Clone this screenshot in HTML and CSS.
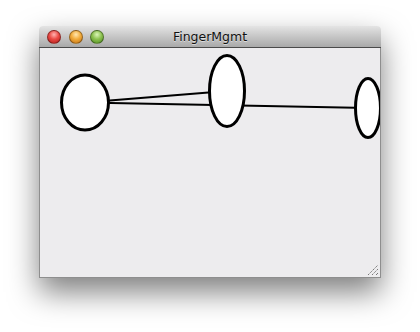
FILE: index.html
```html
<!DOCTYPE html>
<html lang="en">
<head>
    <meta charset="UTF-8">
    <meta name="viewport" content="width=device-width, initial-scale=1.0">
    <title>FingerMgmt</title>
    <link rel="stylesheet" href="styles.css">
</head>
<body>

<div class="window">
    <div class="titlebar">
        <div class="buttons">
            <span class="btn close"></span>
            <span class="btn minimize"></span>
            <span class="btn zoom"></span>
        </div>
        <div class="title">FingerMgmt</div>
    </div>
    <div class="content">
        <svg class="canvas" width="340" height="229" viewBox="0 0 340 229">
            <line x1="45" y1="54.5" x2="187" y2="43" stroke="#000" stroke-width="2"/>
            <line x1="45" y1="54.5" x2="328" y2="60" stroke="#000" stroke-width="2"/>
            <ellipse cx="45" cy="54.5" rx="23.5" ry="27.5" fill="#fff" stroke="#000" stroke-width="3"/>
            <ellipse cx="187" cy="43" rx="17.5" ry="35.5" fill="#fff" stroke="#000" stroke-width="3"/>
            <ellipse cx="328" cy="60" rx="12.5" ry="29.5" fill="#fff" stroke="#000" stroke-width="3"/>
        </svg>
        <svg class="grip" width="12" height="12" viewBox="0 0 12 12">
            <line x1="1" y1="11" x2="11" y2="1" stroke="#777" stroke-width="1" stroke-dasharray="1.5 0.8"/>
            <line x1="5" y1="11" x2="11" y2="5" stroke="#777" stroke-width="1" stroke-dasharray="1.5 0.8"/>
            <line x1="9" y1="11" x2="11" y2="9" stroke="#777" stroke-width="1"/>
        </svg>
    </div>
</div>

</body>
</html>
```

FILE: styles.css
```css
html, body {
    min-height: 332px;
}
body {
    margin: 0;
    padding: 26px 0 0 39px;
    box-sizing: border-box;
    background-color: #fff;
    font-family: "DejaVu Sans", Arial, sans-serif;
}
.window {
    width: 342px;
    border-radius: 4px 4px 0 0;
    box-shadow: 0 14px 30px rgba(0, 0, 0, 0.5);
}
.titlebar {
    position: relative;
    height: 21px;
    border-radius: 4px 4px 0 0;
    border-bottom: 1px solid #4a4a4a;
    background: linear-gradient(#e4e4e4, #c6c6c6 50%, #a9a9a9);
    display: flex;
    align-items: center;
}
.buttons {
    display: flex;
    gap: 7.5px;
    margin-left: 8px;
}
.btn {
    box-sizing: border-box;
    width: 14px;
    height: 14px;
    border-radius: 50%;
    border: 0.5px solid rgba(0, 0, 0, 0.35);
}
.close {
    background: radial-gradient(circle at 50% 30%, #ffb3b0 0, #ea4a45 45%, #b01a17 100%);
}
.minimize {
    background: radial-gradient(circle at 50% 30%, #ffe7b0 0, #f2ac3c 45%, #c06e10 100%);
}
.zoom {
    background: radial-gradient(circle at 50% 30%, #dbf5b8 0, #8dc250 45%, #4d8a1e 100%);
}
.title {
    position: absolute;
    left: 0;
    right: 0;
    text-align: center;
    font-size: 12.5px;
    color: #111;
    text-shadow: 0 1px 0 rgba(255, 255, 255, 0.5);
}
.content {
    position: relative;
    height: 229px;
    background-color: #edecee;
    border: 1px solid #8e8e8e;
    border-top: none;
}
.canvas {
    display: block;
}
.grip {
    position: absolute;
    right: 1px;
    bottom: 1px;
}
```
